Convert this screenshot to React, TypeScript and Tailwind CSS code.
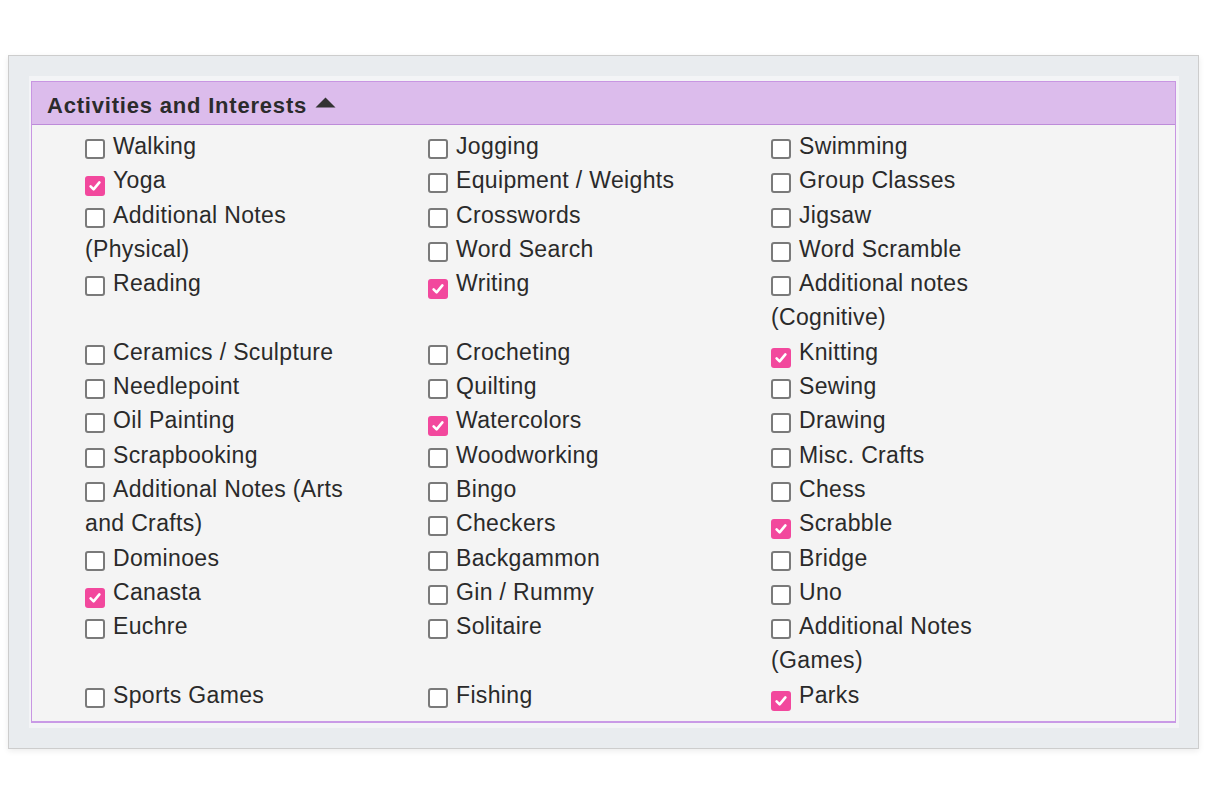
import React from 'react';

type Item = { label: string; checked?: boolean };

const items: Item[] = [
  { label: 'Walking' },
  { label: 'Jogging' },
  { label: 'Swimming' },
  { label: 'Yoga', checked: true },
  { label: 'Equipment / Weights' },
  { label: 'Group Classes' },
  { label: 'Additional Notes (Physical)' },
  { label: 'Crosswords' },
  { label: 'Jigsaw' },
  { label: 'Word Search' },
  { label: 'Word Scramble' },
  { label: 'Reading' },
  { label: 'Writing', checked: true },
  { label: 'Additional notes (Cognitive)' },
  { label: 'Ceramics / Sculpture' },
  { label: 'Crocheting' },
  { label: 'Knitting', checked: true },
  { label: 'Needlepoint' },
  { label: 'Quilting' },
  { label: 'Sewing' },
  { label: 'Oil Painting' },
  { label: 'Watercolors', checked: true },
  { label: 'Drawing' },
  { label: 'Scrapbooking' },
  { label: 'Woodworking' },
  { label: 'Misc. Crafts' },
  { label: 'Additional Notes (Arts and Crafts)' },
  { label: 'Bingo' },
  { label: 'Chess' },
  { label: 'Checkers' },
  { label: 'Scrabble', checked: true },
  { label: 'Dominoes' },
  { label: 'Backgammon' },
  { label: 'Bridge' },
  { label: 'Canasta', checked: true },
  { label: 'Gin / Rummy' },
  { label: 'Uno' },
  { label: 'Euchre' },
  { label: 'Solitaire' },
  { label: 'Additional Notes (Games)' },
  { label: 'Sports Games' },
  { label: 'Fishing' },
  { label: 'Parks', checked: true },
];

function Box({ checked }: { checked?: boolean }) {
  if (checked) {
    return (
      <span className="inline-flex items-center justify-center w-[20px] h-[20px] mr-[8px] align-[-5px] rounded-[3px] bg-[#f2489d]">
        <svg width="14" height="14" viewBox="0 0 14 14" fill="none">
          <path d="M2.6 7.4 L5.6 10.4 L11.4 3.4" stroke="white" strokeWidth="2.6" strokeLinecap="round" strokeLinejoin="round" />
        </svg>
      </span>
    );
  }
  return (
    <span className="inline-block w-[20px] h-[20px] mr-[8px] align-[-5px] rounded-[3px] border-2 border-[#7a7a7a] bg-white" />
  );
}

export default function App() {
  return (
    <div className="min-h-[804px] w-[1206px] bg-white pt-[55px] pl-[8px] font-['Liberation_Sans',Arial,sans-serif]">
      <div className="w-[1191px] h-[694px] border border-[#cdcdcd] bg-[#e9ecef] shadow-[0_2px_6px_rgba(0,0,0,0.08)] pt-[20px] pl-[20px]">
        <div className="w-[1150px] bg-[#f3f4f6] pt-[5px] pb-[5px] pl-[2px] pr-[3px]">
          <div className="border border-[#c896e2] border-b-[2px] border-b-[#c99ae6] bg-[#f4f4f4]">
            <div className="h-[43px] bg-[#dcbcec] border-b border-[#bd8bd9] flex items-center pl-[15px] gap-[8px]">
              <span className="mt-[5px] text-[22px] font-bold text-[#2b2b2b] tracking-[0.8px]">Activities and Interests</span>
              <svg width="21" height="11" viewBox="0 0 21 11" className="mt-[-1px]">
                <path d="M0.5 10.5 L10.5 0.5 L20.5 10.5 Z" fill="#333" />
              </svg>
            </div>
            <div className="flow-root pl-[53px] pt-[4px] pb-[9px] text-[23px] leading-[34.3px] tracking-[0.35px] text-[#2a2a2a]">
              {items.map((it) => (
                <div key={it.label} className="float-left w-[343px] pr-[58px]">
                  <Box checked={it.checked} />
                  {it.label}
                </div>
              ))}
            </div>
          </div>
        </div>
      </div>
    </div>
  );
}
